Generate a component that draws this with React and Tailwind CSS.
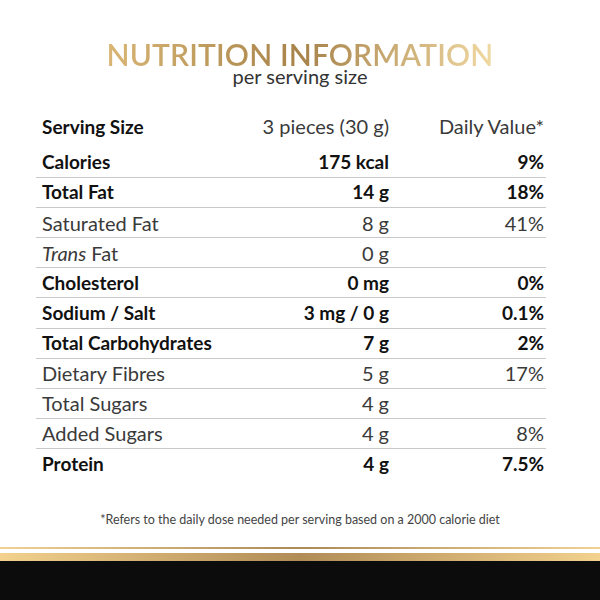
const rows = [
  { label: 'Calories', amount: '175 kcal', dv: '9%', bold: true },
  { label: 'Total Fat', amount: '14 g', dv: '18%', bold: true },
  { label: 'Saturated Fat', amount: '8 g', dv: '41%' },
  { label: 'Trans Fat', amount: '0 g', dv: '', italicFirst: true },
  { label: 'Cholesterol', amount: '0 mg', dv: '0%', bold: true },
  { label: 'Sodium / Salt', amount: '3 mg / 0 g', dv: '0.1%', bold: true },
  { label: 'Total Carbohydrates', amount: '7 g', dv: '2%', bold: true },
  { label: 'Dietary Fibres', amount: '5 g', dv: '17%' },
  { label: 'Total Sugars', amount: '4 g', dv: '' },
  { label: 'Added Sugars', amount: '4 g', dv: '8%' },
  { label: 'Protein', amount: '4 g', dv: '7.5%', bold: true },
];

function Row({ row, last }) {
  const weight = row.bold ? 'text-[19px] font-bold text-[#111]' : 'text-[20px] font-normal text-[#3a3a3a]';
  return (
    <div
      className={`flex h-[30.1px] items-center pl-[6px] pr-[2px] ${weight} ${
        last ? '' : 'border-b-[1.5px] border-[#c9c9c9]'
      }`}
    >
      <span className="flex-1">
        {row.italicFirst ? (
          <>
            <i>Trans</i> Fat
          </>
        ) : (
          row.label
        )}
      </span>
      <span className="w-[160px] text-right">{row.amount}</span>
      <span className="w-[155px] text-right">{row.dv}</span>
    </div>
  );
}

export default function App() {
  return (
    <div className="flex h-[600px] w-[600px] flex-col bg-white font-['Lato',sans-serif]">
      {/* heading */}
      <div className="flex flex-col items-center pt-[42px]">
        <h1 className="bg-gradient-to-r from-[#d9b674] via-[#a7834a] to-[#f1d9a2] bg-clip-text text-[30px] font-semibold leading-[24px] tracking-[0.005em] text-transparent">
          NUTRITION INFORMATION
        </h1>
        <p className="mt-[3px] text-[20px] font-normal leading-[14px] text-[#333]">per serving size</p>
      </div>

      {/* table */}
      <div className="mx-[36px] mt-[25px] w-[510px]">
        <div className="flex h-[30px] items-baseline pl-[6px] pr-[2px] pt-[3px]">
          <span className="flex-1 text-[19px] font-bold text-[#111]">Serving Size</span>
          <span className="w-[160px] text-right text-[20px] font-normal text-[#3a3a3a]">3 pieces (30 g)</span>
          <span className="w-[155px] text-right text-[20px] font-normal text-[#3a3a3a]">Daily Value*</span>
        </div>
        <div className="mt-[10px]">
          {rows.map((r, i) => (
            <Row key={r.label} row={r} last={i === rows.length - 1} />
          ))}
        </div>
      </div>

      <p className="mt-[32px] text-center text-[12.5px] font-normal text-[#444]">
        *Refers to the daily dose needed per serving based on a 2000 calorie diet
      </p>

      {/* gold bands + black footer */}
      <div className="mt-auto">
        <div className="h-[2px] bg-gradient-to-r from-[#f0d291] via-[#ae8a55] to-[#f0d291]" />
        <div className="h-[4px] bg-white" />
        <div className="h-[8px] bg-gradient-to-r from-[#f2d28e] via-[#b08c57] to-[#f2d28e]" />
        <div className="h-[39px] bg-[#0c0c0c]" />
      </div>
    </div>
  );
}
